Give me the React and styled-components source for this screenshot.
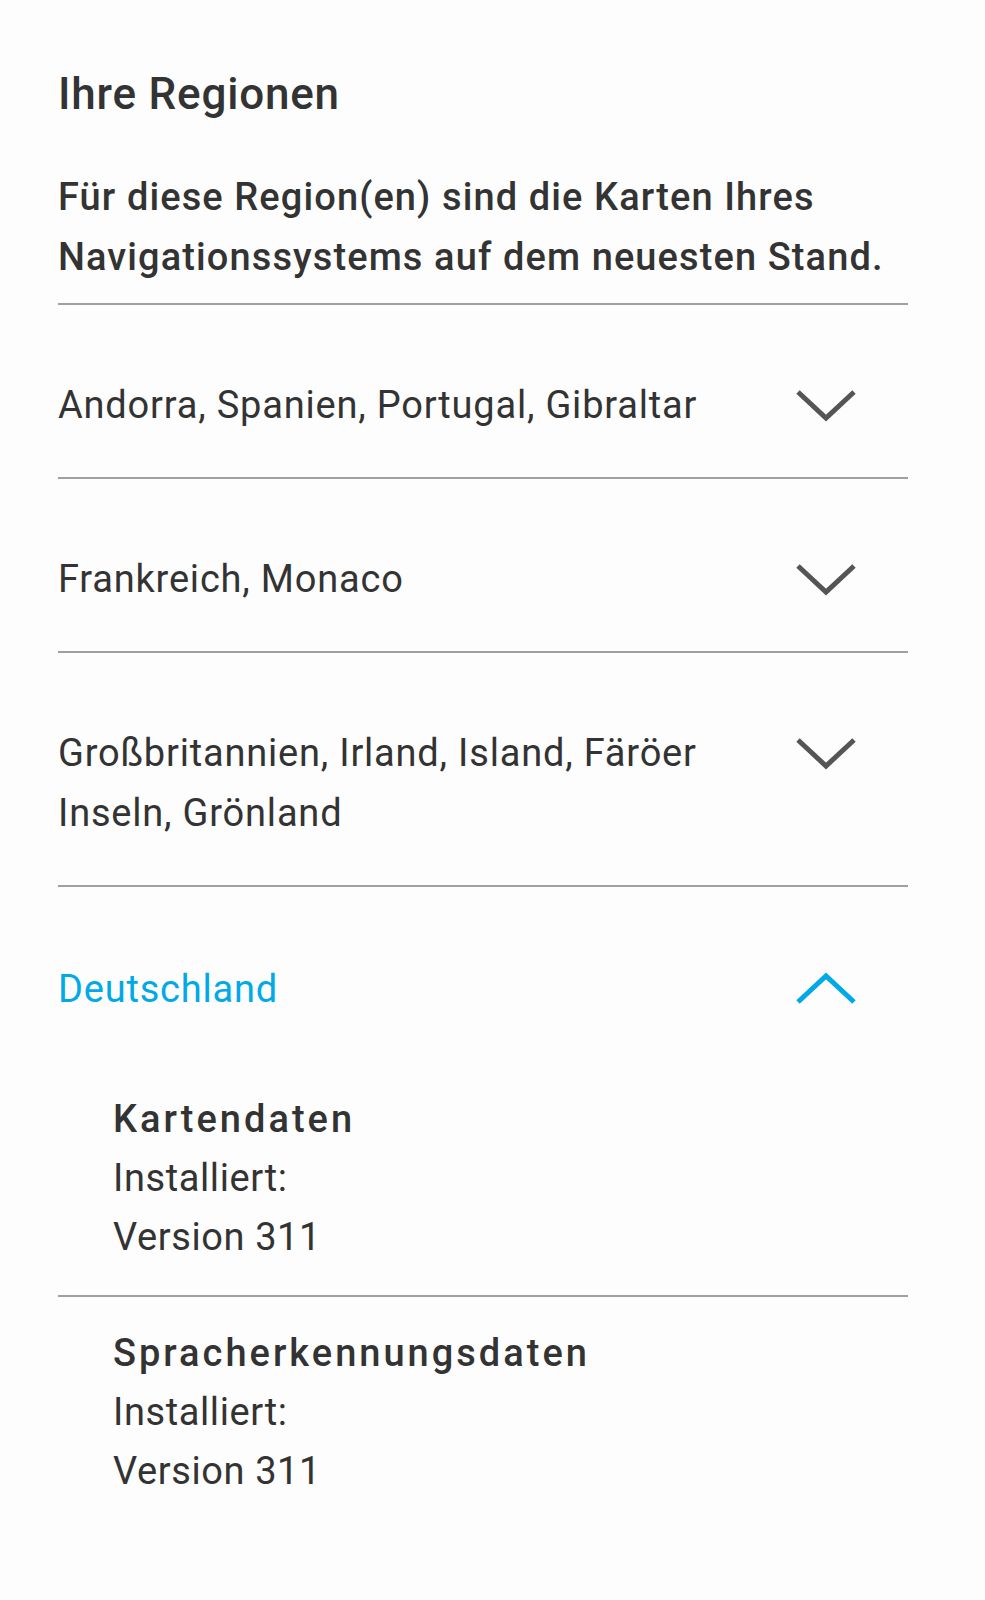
import React from "react";
import styled, { createGlobalStyle } from "styled-components";

const GlobalStyle = createGlobalStyle`
  html, body {
    margin: 0;
    padding: 0;
    background: #fdfdfd;
  }
  body {
    font-family: Roboto, "Noto Sans", sans-serif;
    color: #333;
  }
`;

export const Page = styled.div`
  padding: 62px 77px 60px 58px;
`;

export const Titulo = styled.h1`
  margin: 0;
  font-size: 44px;
  font-weight: 500;
  letter-spacing: 0.8px;
  line-height: 64px;
  color: #333;
`;

export const Intro = styled.p`
  margin: 41px 0 0;
  font-size: 38px;
  font-weight: 500;
  letter-spacing: 1.1px;
  line-height: 60px;
  color: #333;
  padding-bottom: 16px;
  border-bottom: 2px solid #a0a0a0;
`;

export const Item = styled.div`
  border-bottom: ${(props) => (props.last ? "none" : "2px solid #a0a0a0")};
`;

export const Header = styled.div`
  display: flex;
  align-items: flex-start;
  justify-content: space-between;
  padding: ${(props) => (props.open ? "72px 0 0" : "70px 0 42px")};
`;

export const Label = styled.span`
  font-size: 38px;
  letter-spacing: 0.8px;
  line-height: 60px;
  max-width: 690px;
  color: ${(props) => (props.open ? "#00a9e8" : "#333")};
`;

export const Chevron = styled.svg`
  flex: none;
  width: 60px;
  height: 60px;
  margin-right: 52px;
`;

export const Detail = styled.div`
  padding: ${(props) => (props.first ? "71px 0 28px 55px" : "27px 0 28px 55px")};
  border-bottom: ${(props) => (props.last ? "none" : "2px solid #a0a0a0")};
`;

export const DetailTitle = styled.div`
  font-size: 38px;
  font-weight: 500;
  letter-spacing: 3px;
  line-height: 59px;
`;

export const DetailText = styled.div`
  font-size: 38px;
  line-height: 59px;
  letter-spacing: 0.6px;
`;

const ChevronIcon = ({ open }) => (
  <Chevron viewBox="0 0 60 60">
    {open ? (
      <polyline
        points="2,43 30,17 58,43"
        fill="none"
        stroke="#00a9e8"
        strokeWidth="5"
      />
    ) : (
      <polyline
        points="2,17 30,43 58,17"
        fill="none"
        stroke="#555"
        strokeWidth="5"
      />
    )}
  </Chevron>
);

const regionen = [
  "Andorra, Spanien, Portugal, Gibraltar",
  "Frankreich, Monaco",
  "Großbritannien, Irland, Island, Färöer Inseln, Grönland",
];

const daten = ["Kartendaten", "Spracherkennungsdaten"];

export default function App() {
  return (
    <>
      <GlobalStyle />
      <Page>
        <Titulo>Ihre Regionen</Titulo>
        <Intro>
          Für diese Region(en) sind die Karten Ihres Navigationssystems auf
          dem neuesten Stand.
        </Intro>
        {regionen.map((r) => (
          <Item key={r}>
            <Header>
              <Label>{r}</Label>
              <ChevronIcon />
            </Header>
          </Item>
        ))}
        <Item last>
          <Header open>
            <Label open>Deutschland</Label>
            <ChevronIcon open />
          </Header>
          {daten.map((d, i) => (
            <Detail key={d} first={i === 0} last={i === daten.length - 1}>
              <DetailTitle>{d}</DetailTitle>
              <DetailText>Installiert:</DetailText>
              <DetailText>Version 311</DetailText>
            </Detail>
          ))}
        </Item>
      </Page>
    </>
  );
}
